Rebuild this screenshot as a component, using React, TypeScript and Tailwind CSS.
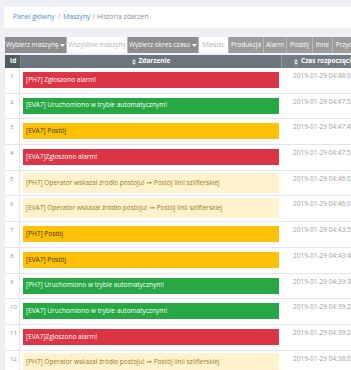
import React from 'react';

type Kind = 'red' | 'green' | 'yellow' | 'pale';

interface EventRow {
  id: number;
  text: string;
  kind: Kind;
  time: string;
}

const ROWS: EventRow[] = [
  { id: 1, text: '[PH7] Zgłoszono alarm!', kind: 'red', time: '2019-01-29 04:48:03' },
  { id: 2, text: '[EVA7] Uruchomiono w trybie automatycznym!', kind: 'green', time: '2019-01-29 04:47:57' },
  { id: 3, text: '[EVA7] Postój', kind: 'yellow', time: '2019-01-29 04:47:40' },
  { id: 4, text: '[EVA7]Zgłoszono alarm!', kind: 'red', time: '2019-01-29 04:47:54' },
  { id: 5, text: '[PH7] Operator wskazał źródło postoju! ➞ Postój linii szlifierskiej', kind: 'pale', time: '2019-01-29 04:46:05' },
  { id: 6, text: '[EVA7] Operator wskazał źródło postoju! ➞ Postój linii szlifierskiej', kind: 'pale', time: '2019-01-29 04:46:01' },
  { id: 7, text: '[PH7] Postój', kind: 'yellow', time: '2019-01-29 04:43:58' },
  { id: 8, text: '[EVA7] Postój', kind: 'yellow', time: '2019-01-29 04:43:48' },
  { id: 9, text: '[PH7] Uruchomiono w trybie automatycznym!', kind: 'green', time: '2019-01-29 04:39:36' },
  { id: 10, text: '[EVA7] Uruchomiono w trybie automatycznym!', kind: 'green', time: '2019-01-29 04:39:28' },
  { id: 11, text: '[EVA7]Zgłoszono alarm!', kind: 'red', time: '2019-01-29 04:39:20' },
  { id: 12, text: '[PH7] Operator wskazał źródło postoju! ➞ Postój linii szlifierskiej', kind: 'pale', time: '2019-01-29 04:38:08' },
];

const BAR_STYLES: Record<Kind, string> = {
  red: 'h-[16px] bg-[#dc3545] text-white',
  green: 'h-[16px] bg-[#28a745] text-white',
  yellow: 'h-[16px] bg-[#ffc107] text-[#3d3300]',
  pale: 'h-[20px] bg-[#fff3cd] text-[#9a7a2c]',
};

// toolbar buttons, "active" ones are white
const TOOLBAR = [
  { label: 'Wybierz maszynę', w: 'w-[62px]', style: 'bg-[#8e8e8e] text-white', caret: true },
  { label: 'Wszystkie maszyny', w: 'w-[61px]', style: 'bg-white text-[#b4b4b4]', caret: false },
  { label: 'Wybierz okres czasu', w: 'w-[71px]', style: 'bg-[#8e8e8e] text-white', caret: true },
  { label: 'Miesiac', w: 'w-[30px]', style: 'bg-white text-[#b4b4b4]', caret: false },
  { label: 'Produkcja', w: 'w-[35px]', style: 'bg-[#9c9c9c] text-white', caret: false },
  { label: 'Alarm', w: 'w-[23px]', style: 'bg-[#9c9c9c] text-white', caret: false },
  { label: 'Postój', w: 'w-[26px]', style: 'bg-[#9c9c9c] text-white', caret: false },
  { label: 'Inne', w: 'w-[20px]', style: 'bg-[#9c9c9c] text-white', caret: false },
  { label: 'Przyczyny', w: 'w-[36px]', style: 'bg-[#9c9c9c] text-white', caret: false },
];

const SortIcon = () => (
  <svg width="4" height="6" viewBox="0 0 4 6" className="mr-[3px] shrink-0">
    <path d="M2 0 L4 2.4 H0 Z M2 6 L4 3.6 H0 Z" fill="#e9ecef" />
  </svg>
);

export default function App() {
  return (
    <div
      className="w-[351px] h-[370px] overflow-hidden bg-[#eef0f3] pt-[7px] text-[6.5px] leading-none"
      style={{ fontFamily: '"Open Sans", "Liberation Sans", sans-serif' }}
    >
      {/* Breadcrumb */}
      <div className="ml-[4px] h-[21px] bg-white flex items-center pl-[9px] text-[6.8px] whitespace-nowrap">
        <span className="text-[#4a8fd0]">Panel główny</span>
        <span className="text-[#9aa0a6] mx-[3px]">/</span>
        <span className="text-[#4a8fd0]">Maszyny</span>
        <span className="text-[#9aa0a6] mx-[2px]">/</span>
        <span className="text-[#8a9096]">Historia zdarzeń</span>
      </div>

      {/* Toolbar */}
      <div className="ml-[5px] mt-[9px] h-[16px] flex w-[400px]">
        {TOOLBAR.map(b => (
          <div
            key={b.label}
            className={`${b.w} ${b.style} shrink-0 h-full flex items-center justify-center whitespace-nowrap border-r border-[#b8b8b8] text-[6.5px]`}
          >
            {b.label}
            {b.caret && (
              <svg width="5" height="3" viewBox="0 0 5 3" className="ml-[2px]">
                <path d="M0 0 H5 L2.5 3 Z" fill="#ffffff" />
              </svg>
            )}
          </div>
        ))}
      </div>

      {/* Table */}
      <div className="ml-[5px] mt-[2px] w-[400px] bg-white">
        <div className="grid grid-cols-[15px_261px_1fr] h-[13px] text-white font-bold text-[6.5px]">
          <div className="bg-[#525a62] flex items-center pl-[5px]">Id</div>
          <div className="bg-[#6c757d] flex items-center justify-center border-l border-[#7d858c]">
            <SortIcon />
            Zdarzenie
          </div>
          <div className="bg-[#737b83] flex items-center pl-[12px] border-l border-[#959ca2] whitespace-nowrap">
            <SortIcon />
            Czas rozpoczęcia
          </div>
        </div>

        {ROWS.map(r => (
          <div key={r.id} className="grid grid-cols-[15px_261px_1fr] h-[25.7px] border-b border-[#e3e6ea]">
            <div className="border-r border-[#e3e6ea] pl-[5px] pt-[5px] text-[#8c9298] text-[6px]">{r.id}</div>
            <div className={`pl-[3px] pr-[2px] ${r.kind === 'pale' ? 'pt-[2px]' : 'pt-[4px]'}`}>
              <div className={`${BAR_STYLES[r.kind]} flex items-center px-[3px] whitespace-nowrap overflow-hidden`}>
                {r.text}
              </div>
            </div>
            <div className="pl-[12px] pt-[5px] text-[#9aa0a6] whitespace-nowrap">{r.time}</div>
          </div>
        ))}
      </div>
    </div>
  );
}
